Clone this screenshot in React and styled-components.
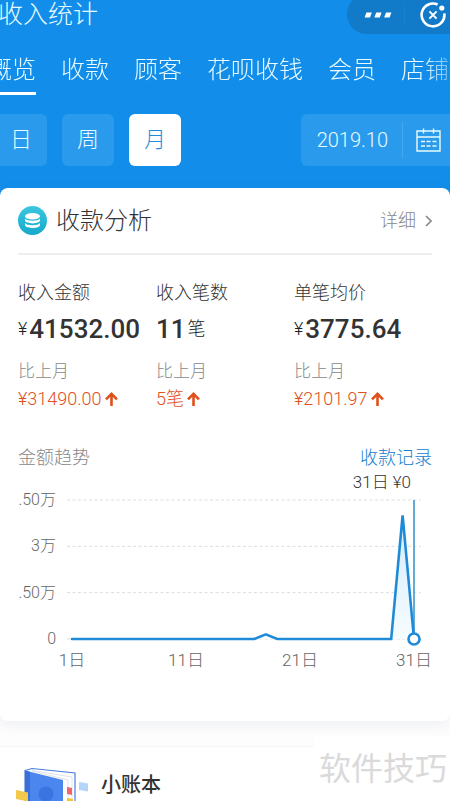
import React, { useState } from 'react';
import styled, { createGlobalStyle } from 'styled-components';

const GlobalStyle = createGlobalStyle`
  * {
    box-sizing: border-box;
  }

  body {
    margin: 0;
    background: #fdfdfd;
    font-family: Roboto, 'Noto Sans CJK SC', sans-serif;
    font-weight: 300;
    color: #333;
  }

  button {
    border: none;
    padding: 0;
    background: none;
    font: inherit;
    color: inherit;
    cursor: pointer;
  }

  h1, h2, h3, p, dl, dt, dd {
    margin: 0;
    font-size: inherit;
    font-weight: inherit;
  }

  a {
    color: inherit;
    text-decoration: none;
  }

  svg {
    display: block;
  }
`;

const Page = styled.div`
  position: relative;
  height: 100vh;
  overflow: hidden;
`;

const Header = styled.header`
  background: #128eea;
  color: #e9fbff;
  padding-bottom: 34px;
`;

const TitleBar = styled.div`
  display: flex;
  justify-content: space-between;
  height: 34px;
`;

const Title = styled.h1`
  margin-left: -2px;
  font-size: 25px;
  line-height: 30px;
`;

const Capsule = styled.div`
  display: flex;
  align-items: center;
  height: 40px;
  margin-top: -6px;
  padding-top: 2px;
  border-radius: 20px 0 0 20px;
  background: #117ac9;
`;

const CapsuleButton = styled.button`
  display: flex;
  align-items: center;
  height: 20px;
  padding: 0 12px 0 17px;

  & + & {
    padding: 0 4px 0 15px;
    border-left: 1px solid #1a80cd;
  }
`;

const Tabs = styled.nav`
  display: flex;
  gap: 25px;
  margin-left: -12px;
  padding-top: 21px;
  overflow: hidden;
  mask-image: linear-gradient(to left, rgba(0, 0, 0, 0.4), #000 28px);
`;

const Tab = styled.a`
  flex: none;
  padding-bottom: 7px;
  border-bottom: 3px solid ${({ $active }) => ($active ? '#fff' : 'transparent')};
  font-size: 24px;
  line-height: 30px;
`;

const Filters = styled.div`
  display: flex;
  gap: 15px;
  margin-top: 19px;
  margin-left: -5px;
`;

const Period = styled.button`
  width: 52px;
  height: 52px;
  border-radius: 6px;
  background: ${({ $active }) => ($active ? '#fff' : '#2a9aec')};
  color: ${({ $active }) => ($active ? '#1f8ee0' : '#e9fbff')};
  font-size: 22px;
  line-height: 52px;
`;

const DatePicker = styled.button`
  display: flex;
  align-items: center;
  margin-left: auto;
  padding-left: 16px;
  border-radius: 6px 0 0 6px;
  background: #2a9aec;
  font-size: 20px;

  svg {
    margin-left: 14px;
    padding: 6px 9px 6px 13px;
    border-left: 1px solid #45a7ee;
    box-sizing: content-box;
  }
`;

const Card = styled.section`
  position: relative;
  margin-top: -12px;
  padding: 0 18px 51px;
  border-radius: 8px;
  background: #fff;
  box-shadow: 0 4px 14px rgba(60, 80, 110, 0.08);
`;

const CardHeader = styled.div`
  display: flex;
  align-items: center;
  height: 67px;
  border-bottom: 2px solid #eee;
  line-height: 32px;
`;

const CardTitle = styled.h2`
  margin-left: 9px;
  font-size: 24px;
`;

const Detail = styled.a`
  display: flex;
  align-items: center;
  gap: 9px;
  margin-left: auto;
  color: #888;
  font-size: 18px;
`;

const Stats = styled.dl`
  display: grid;
  grid-template-columns: repeat(3, 1fr);
  margin-top: 24px;
  line-height: 28px;
`;

const StatLabel = styled.dt`
  font-size: 18px;
`;

const StatValue = styled.dd`
  display: flex;
  align-items: center;
  gap: 2px;
  height: 44px;
  color: #222;
  font-size: 18px;

  strong {
    color: #333;
    font-size: 26px;
    font-weight: 500;
  }
`;

const Compare = styled.dd`
  margin-top: 6px;
  color: #888;
  font-size: 17px;
`;

const Change = styled.dd`
  display: flex;
  align-items: center;
  gap: 3px;
  color: #e0501c;
  font-size: 18px;
`;

const TrendHeader = styled.div`
  display: flex;
  justify-content: space-between;
  margin-top: 31px;
  color: #888;
  font-size: 18px;
  line-height: 28px;
`;

const RecordLink = styled.a`
  color: #1580d0;
`;

const Selected = styled.p`
  padding-right: 21px;
  font-size: 17px;
  line-height: 20px;
  text-align: right;
`;

const Chart = styled.div`
  display: grid;
  grid-template-columns: 38px 1fr;
  column-gap: 11px;
  padding: 8px 11px 0 0;
  color: #666;
  font-size: 17px;
  line-height: 20px;
`;

const YAxis = styled.div`
  display: flex;
  flex-direction: column;
  justify-content: space-between;
  align-items: flex-end;
  margin: -10px 0;
  font-size: 16px;
  white-space: nowrap;
`;

const Plot = styled.svg`
  width: 100%;
  height: auto;
  overflow: visible;
`;

const XAxis = styled.div`
  grid-column: 2;
  display: flex;
  justify-content: space-between;
  margin: 11px -13px 0 -15px;

  span {
    width: 40px;
    text-align: center;
    white-space: nowrap;
  }
`;

const Ledger = styled.section`
  display: flex;
  gap: 11px;
  margin-top: 25px;
  padding: 20px 16px;
  border-top: 1px solid #f6f6f6;
  background: #fff;
`;

const LedgerTitle = styled.h3`
  font-size: 20px;
  font-weight: 500;
  line-height: 36px;
`;

const Watermark = styled.div`
  position: absolute;
  right: 0;
  bottom: 0;
  padding: 8px 3px 8px 5px;
  background: #fff;
  color: #dadada;
  font-size: 32px;
  font-weight: 400;
  line-height: 48px;
`;

const tabs = ['概览', '收款', '顾客', '花呗收钱', '会员', '店铺'];
const periods = ['日', '周', '月'];

const stats = [
  { label: '收入金额', prefix: '¥', value: '41532.00', change: '¥31490.00' },
  { label: '收入笔数', value: '11', suffix: '笔', change: '5笔' },
  { label: '单笔均价', prefix: '¥', value: '3775.64', change: '¥2101.97' },
];

// Daily amounts, in units of 10,000
const days = Array.from({ length: 31 }, (_, i) => {
  if (i === 17) return 0.15;
  if (i === 29) return 4;
  return 0;
});

const dayX = (i) => 5 + i * 11.4;
const amountY = (v) => 139 - (v / 4.5) * 139;

const MoreIcon = () => (
  <svg width="28" height="6" viewBox="0 0 28 6" fill="#fff">
    <path d="M2.4 0.5h5.4l-1.8 5H0.6zM12.2 0.5h5.4l-1.8 5h-5.4zM22 0.5h5.4l-1.8 5h-5.4z" />
  </svg>
);

const CloseIcon = () => (
  <svg width="26" height="26" viewBox="0 0 26 26" fill="none" stroke="#fff" strokeWidth="2.6">
    <path d="M17.6 2.5A11.4 11.4 0 1 0 24.3 11.4" />
    <path d="M9.4 9.4l7.2 7.2M16.6 9.4l-7.2 7.2" strokeWidth="2" />
    <circle cx="21.8" cy="6" r="2.6" fill="#fff" stroke="none" />
  </svg>
);

const CalendarIcon = () => (
  <svg width="25" height="24" viewBox="0 0 25 24" fill="none" stroke="#e9fbff" strokeWidth="1.4">
    <path d="M1 3h23v20H1zM1 9h23M7.5 0.5v5M17.5 0.5v5" />
    <path d="M5 13.5h4M10.5 13.5h4M16.5 13.5h4M5 18h4M10.5 18h4M16.5 18h4" strokeWidth="1.6" />
  </svg>
);

const CoinsIcon = () => (
  <svg width="29" height="29" viewBox="0 0 29 29">
    <defs>
      <linearGradient id="coins" x1="0" y1="0" x2="0" y2="1">
        <stop offset="0" stopColor="#3cc6df" />
        <stop offset="1" stopColor="#16a9cb" />
      </linearGradient>
    </defs>
    <circle cx="14.5" cy="14.5" r="14.5" fill="url(#coins)" />
    <ellipse cx="14.5" cy="10.2" rx="7.5" ry="3.2" fill="#fff" />
    <path
      d="M7 12.4c1.8 3 13.200 3 15 0v2.200c-1 3.700-14 3.700-15 0zM7 17c1.800 3 13.200 3 15 0v2.200c-1 3.700-14 3.700-15 0z"
      fill="#fff"
    />
  </svg>
);

const ChevronIcon = () => (
  <svg width="7" height="12" viewBox="0 0 7 12" fill="none" stroke="#888" strokeWidth="1.6">
    <path d="M1 1l5 5-5 5" />
  </svg>
);

const ArrowUpIcon = () => (
  <svg width="13" height="14" viewBox="0 0 13 14" fill="none" stroke="#e0501c" strokeWidth="2.6">
    <path d="M6.5 14V2M1 7.4l5.5-5.5L12 7.4" />
  </svg>
);

const BookIcon = () => (
  <svg width="74" height="44" viewBox="0 0 74 44">
    <path d="M9 3.5l7-2L59 6v38H9z" fill="#fff" stroke="#4a7fdc" strokeWidth="1.2" />
    <path d="M16 3.500L56 10v34M16 4l36 9v31" fill="none" stroke="#d5dbe6" strokeWidth="0.8" />
    <path d="M9 3.5L47 13v31H9z" fill="#4a86ee" />
    <path d="M9 3.5l5 1.300V44H9z" fill="#3a6fd6" />
    <circle cx="30" cy="27" r="7.5" fill="#3b74e0" />
    <path d="M51 20l5 1v7l-5-1z" fill="#ee6470" />
    <path d="M51 31l6 1v7l-6-1z" fill="#f2c230" />
    <path d="M63 15l9 1.500v8L63 23z" fill="#b3d5f7" />
    <path d="M0 23l12 2.500v9L0 32z" fill="#f2c94c" />
  </svg>
);

const TrendPlot = () => {
  const line = days.map((v, i) => `${dayX(i)},${amountY(v)}`).join(' ');

  return (
    <Plot viewBox="0 0 354 139" role="img" aria-label="金额趋势">
      <defs>
        <linearGradient id="area" x1="0" y1="0" x2="0" y2="1">
          <stop offset="0" stopColor="#d3ecfb" />
          <stop offset="1" stopColor="#f6fcff" />
        </linearGradient>
      </defs>
      {[0, 1.5, 3, 4.5].map((v) => (
        <line
          key={v}
          x1="0"
          x2="354"
          y1={amountY(v)}
          y2={amountY(v)}
          stroke="#ddd"
          strokeDasharray="3 2.5"
        />
      ))}
      <polygon points={`5,139 ${line}`} fill="url(#area)" />
      <line x1="347" x2="347" y1="0" y2="139" stroke="#3b97cf" strokeWidth="1.6" />
      <polyline points={line} fill="none" stroke="#1e8ad8" strokeWidth="2.6" strokeLinecap="round" />
      <circle cx="347" cy="139" r="5.5" fill="#fff" stroke="#1e8ad8" strokeWidth="2.6" />
    </Plot>
  );
};

const App = () => {
  const [period, setPeriod] = useState('月');

  return (
    <>
      <GlobalStyle />
      <Page>
        <Header>
          <TitleBar>
            <Title>收入统计</Title>
            <Capsule>
              <CapsuleButton aria-label="更多">
                <MoreIcon />
              </CapsuleButton>
              <CapsuleButton aria-label="关闭">
                <CloseIcon />
              </CapsuleButton>
            </Capsule>
          </TitleBar>
          <Tabs>
            {tabs.map((tab, i) => (
              <Tab key={tab} href="#" $active={i === 0}>
                {tab}
              </Tab>
            ))}
          </Tabs>
          <Filters>
            {periods.map((p) => (
              <Period key={p} $active={p === period} onClick={() => setPeriod(p)}>
                {p}
              </Period>
            ))}
            <DatePicker>
              2019.10
              <CalendarIcon />
            </DatePicker>
          </Filters>
        </Header>

        <Card>
          <CardHeader>
            <CoinsIcon />
            <CardTitle>收款分析</CardTitle>
            <Detail href="#">
              详细
              <ChevronIcon />
            </Detail>
          </CardHeader>
          <Stats>
            {stats.map((s) => (
              <div key={s.label}>
                <StatLabel>{s.label}</StatLabel>
                <StatValue>
                  {s.prefix}
                  <strong>{s.value}</strong>
                  {s.suffix}
                </StatValue>
                <Compare>比上月</Compare>
                <Change>
                  {s.change}
                  <ArrowUpIcon />
                </Change>
              </div>
            ))}
          </Stats>
          <TrendHeader>
            <h3>金额趋势</h3>
            <RecordLink href="#">收款记录</RecordLink>
          </TrendHeader>
          <Selected>31日 ¥0</Selected>
          <Chart>
            <YAxis>
              <span>.50万</span>
              <span>3万</span>
              <span>.50万</span>
              <span>0</span>
            </YAxis>
            <TrendPlot />
            <XAxis>
              <span>1日</span>
              <span>11日</span>
              <span>21日</span>
              <span>31日</span>
            </XAxis>
          </Chart>
        </Card>

        <Ledger>
          <BookIcon />
          <LedgerTitle>小账本</LedgerTitle>
        </Ledger>
        <Watermark>软件技巧</Watermark>
      </Page>
    </>
  );
};

export default App;
